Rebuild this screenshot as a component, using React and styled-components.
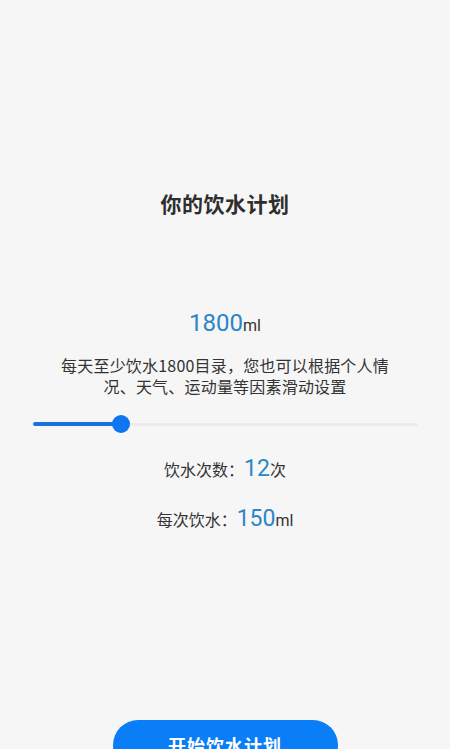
import React from 'react';
import styled, { createGlobalStyle } from 'styled-components';

const GlobalStyle = createGlobalStyle`
  html, body {
    margin: 0;
    padding: 0;
    background: #f6f6f6;
  }
  body {
    font-family: 'Noto Sans CJK SC', 'Noto Sans', sans-serif;
  }
`;

const plan = {
  total: 1800,
  times: 12,
  each: 150,
  progress: 0.229,
};

const App = () => (
  <Page>
    <GlobalStyle />
    <Title>你的饮水计划</Title>
    <Amount>
      <Number size={24}>{plan.total}</Number>
      <Unit>ml</Unit>
    </Amount>
    <Description>
      每天至少饮水1800目录，您也可以根据个人情况、天气、运动量等因素滑动设置
    </Description>
    <Slider>
      <Track />
      <Fill style={{ width: `${plan.progress * 100}%` }} />
      <Thumb style={{ left: `${plan.progress * 100}%` }} />
    </Slider>
    <Stat>
      <Label>饮水次数：</Label>
      <Number size={23}>{plan.times}</Number>
      <Label>次</Label>
    </Stat>
    <Stat gap={22}>
      <Label>每次饮水：</Label>
      <Number size={23}>{plan.each}</Number>
      <Unit>ml</Unit>
    </Stat>
    <Spacer />
    <StartButton>开始饮水计划</StartButton>
  </Page>
);

const Page = styled.div`
  display: flex;
  flex-direction: column;
  align-items: center;
  height: 749px;
  overflow: hidden;
  background: #f6f6f6;
`;

const Title = styled.h1`
  margin: 189px 0 0;
  font-size: 21px;
  line-height: 28px;
  font-weight: 700;
  color: #2e2e2e;
  letter-spacing: 0.5px;
`;

const Amount = styled.div`
  display: flex;
  align-items: baseline;
  margin-top: 91px;
  height: 30px;
`;

const Number = styled.span`
  font-family: 'Roboto', 'Noto Sans', sans-serif;
  font-size: ${(p) => p.size}px;
  color: #2a86c9;
  line-height: 30px;
`;

const Unit = styled.span`
  font-family: 'Roboto', 'Noto Sans', sans-serif;
  font-size: 16px;
  color: #333;
`;

const Description = styled.p`
  margin: 17px 0 0;
  width: 340px;
  text-align: center;
  font-size: 16px;
  line-height: 21px;
  letter-spacing: 0.2px;
  color: #333;
`;

const Slider = styled.div`
  position: relative;
  align-self: stretch;
  margin: 18px 32px 0 33px;
  height: 18px;
  display: flex;
  align-items: center;
`;

const Track = styled.div`
  width: 100%;
  height: 3px;
  border-radius: 2px;
  background: #ebebeb;
`;

const Fill = styled.div`
  position: absolute;
  left: 0;
  top: 7px;
  height: 4px;
  border-radius: 2px;
  background: #1a73dc;
`;

const Thumb = styled.div`
  position: absolute;
  top: 0;
  width: 18px;
  height: 18px;
  margin-left: -9px;
  border-radius: 50%;
  background: #0f76f0;
`;

const Stat = styled.div`
  display: flex;
  align-items: baseline;
  margin-top: ${(p) => p.gap || 21}px;
  height: 28px;
`;

const Label = styled.span`
  font-size: 16px;
  color: #333;
`;

const Spacer = styled.div`
  flex: 1;
`;

const StartButton = styled.button`
  flex-shrink: 0;
  width: 225px;
  height: 50px;
  margin-bottom: -21px;
  border: none;
  border-radius: 25px;
  background: #0a7ef6;
  color: #fff;
  font-family: 'Noto Sans CJK SC', sans-serif;
  font-size: 18px;
  font-weight: 700;
  letter-spacing: 1px;
`;

export default App;
